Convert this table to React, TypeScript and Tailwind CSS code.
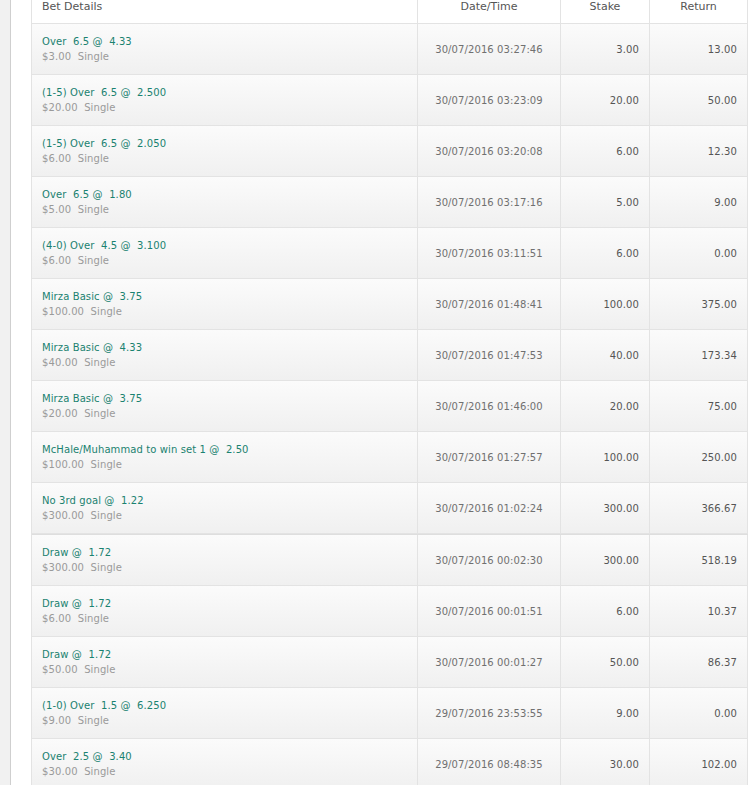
import React from 'react';

type Bet = {
  title: string;
  amount: string;
  date: string;
  stake: string;
  ret: string;
  divider?: boolean;
};

const bets: Bet[] = [
  { title: 'Over  6.5 @  4.33', amount: '$3.00', date: '30/07/2016 03:27:46', stake: '3.00', ret: '13.00' },
  { title: '(1-5) Over  6.5 @  2.500', amount: '$20.00', date: '30/07/2016 03:23:09', stake: '20.00', ret: '50.00' },
  { title: '(1-5) Over  6.5 @  2.050', amount: '$6.00', date: '30/07/2016 03:20:08', stake: '6.00', ret: '12.30' },
  { title: 'Over  6.5 @  1.80', amount: '$5.00', date: '30/07/2016 03:17:16', stake: '5.00', ret: '9.00' },
  { title: '(4-0) Over  4.5 @  3.100', amount: '$6.00', date: '30/07/2016 03:11:51', stake: '6.00', ret: '0.00' },
  { title: 'Mirza Basic @  3.75', amount: '$100.00', date: '30/07/2016 01:48:41', stake: '100.00', ret: '375.00' },
  { title: 'Mirza Basic @  4.33', amount: '$40.00', date: '30/07/2016 01:47:53', stake: '40.00', ret: '173.34' },
  { title: 'Mirza Basic @  3.75', amount: '$20.00', date: '30/07/2016 01:46:00', stake: '20.00', ret: '75.00' },
  { title: 'McHale/Muhammad to win set 1 @  2.50', amount: '$100.00', date: '30/07/2016 01:27:57', stake: '100.00', ret: '250.00' },
  { title: 'No 3rd goal @  1.22', amount: '$300.00', date: '30/07/2016 01:02:24', stake: '300.00', ret: '366.67' },
  { title: 'Draw @  1.72', amount: '$300.00', date: '30/07/2016 00:02:30', stake: '300.00', ret: '518.19', divider: true },
  { title: 'Draw @  1.72', amount: '$6.00', date: '30/07/2016 00:01:51', stake: '6.00', ret: '10.37' },
  { title: 'Draw @  1.72', amount: '$50.00', date: '30/07/2016 00:01:27', stake: '50.00', ret: '86.37' },
  { title: '(1-0) Over  1.5 @  6.250', amount: '$9.00', date: '29/07/2016 23:53:55', stake: '9.00', ret: '0.00' },
  { title: 'Over  2.5 @  3.40', amount: '$30.00', date: '29/07/2016 08:48:35', stake: '30.00', ret: '102.00' },
];

const font = { fontFamily: '"DejaVu Sans", Verdana, sans-serif' };

export default function App() {
  return (
    <div className="flex min-h-[785px] bg-white overflow-hidden" style={font}>
      {/* left page gutter */}
      <div className="w-[11px] shrink-0 bg-[#f1f1f1] border-r border-[#cfcfcf]" />

      <div className="pl-[20px]">
        <div className="w-[717px] border-l border-[#e3e3e3] -mt-[9px]">
          {/* header */}
          <div className="grid grid-cols-[386px_143px_89px_98px] h-[33px] bg-white border-b border-[#e3e3e3] text-[11px] text-[#555]">
            <div className="border-r border-[#e3e3e3] pl-[10px] flex items-center">Bet Details</div>
            <div className="border-r border-[#e3e3e3] flex items-center justify-center">Date/Time</div>
            <div className="border-r border-[#e3e3e3] flex items-center justify-center">Stake</div>
            <div className="border-r border-[#e3e3e3] flex items-center justify-center">Return</div>
          </div>

          {bets.map((b, i) => (
            <div
              key={i}
              className={`grid grid-cols-[386px_143px_89px_98px] border-b border-[#e3e3e3] bg-gradient-to-b from-[#fbfbfb] to-[#f0f0f0] text-[10px] tracking-[0.1px] ${
                b.divider ? 'h-[52px] border-t border-t-[#dedede]' : 'h-[51px]'
              }`}
            >
              <div className="border-r border-[#e3e3e3] pl-[10px] flex flex-col justify-center leading-[15px] whitespace-pre">
                <span className="text-[#1a8270]">{b.title}</span>
                <span className="text-[#9a9a9a]">{b.amount}  Single</span>
              </div>
              <div className="border-r border-[#e3e3e3] flex items-center justify-center text-[#707070]">{b.date}</div>
              <div className="border-r border-[#e3e3e3] flex items-center justify-end pr-[10px] text-[#555]">{b.stake}</div>
              <div className="border-r border-[#e3e3e3] flex items-center justify-end pr-[10px] text-[#555]">{b.ret}</div>
            </div>
          ))}
        </div>
      </div>
    </div>
  );
}
